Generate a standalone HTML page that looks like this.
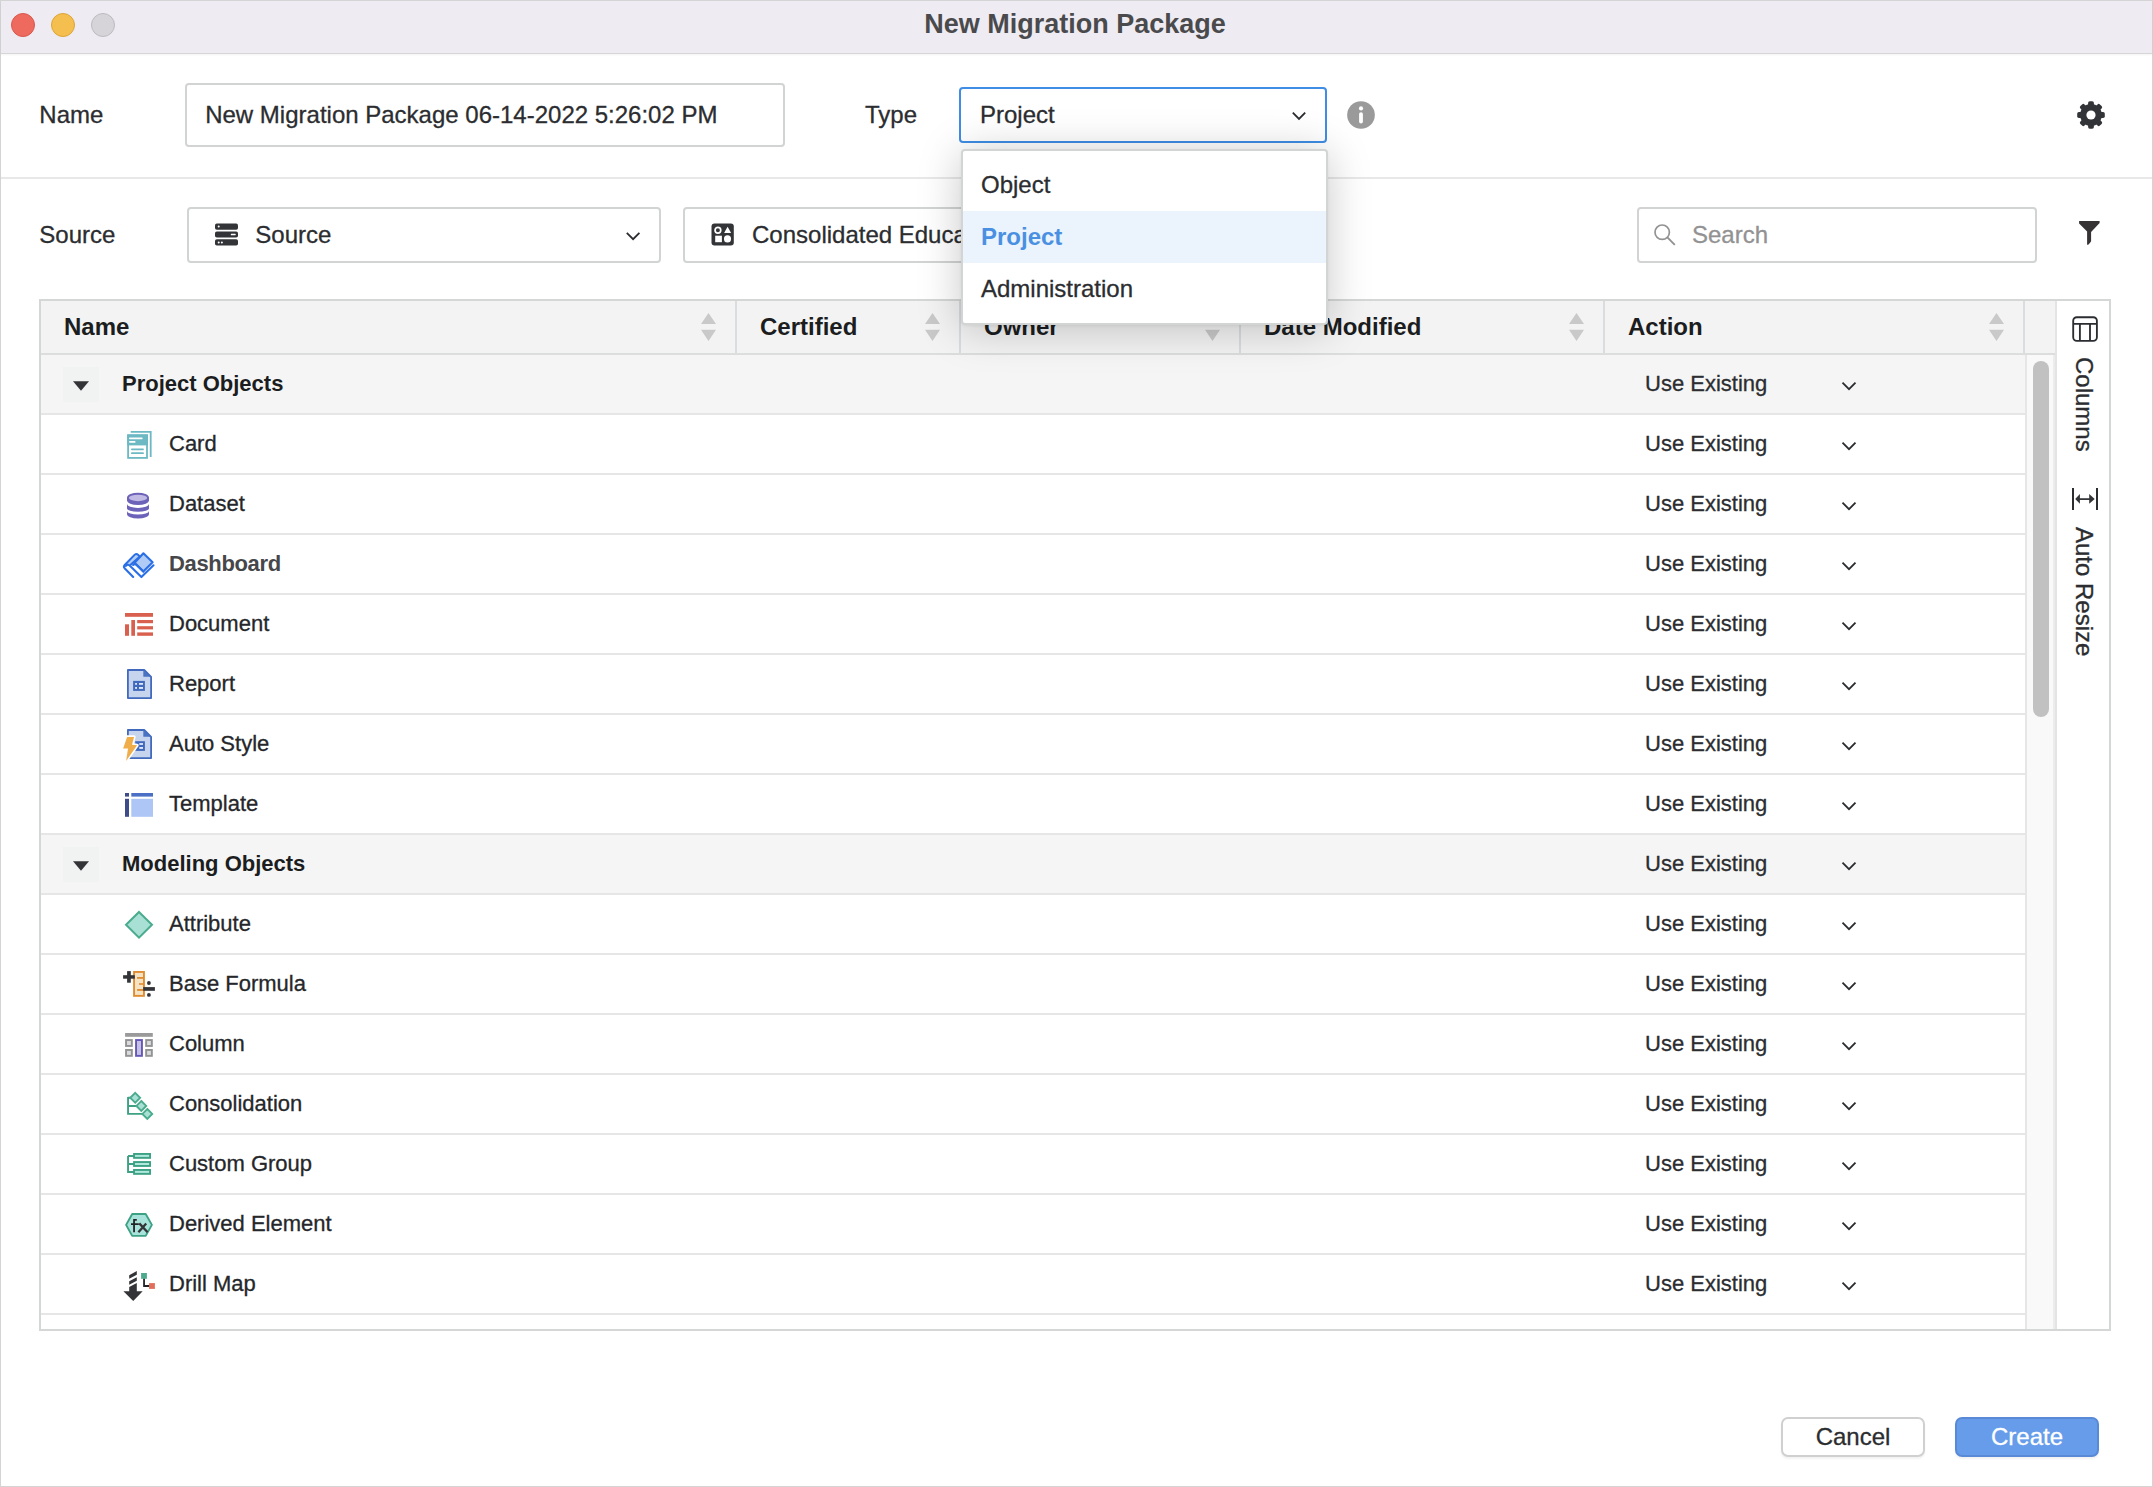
<!DOCTYPE html>
<html>
<head>
<meta charset="utf-8">
<style>
*{box-sizing:border-box;margin:0;padding:0}
html,body{width:2153px;height:1487px;overflow:hidden;background:#fff}
body{font-family:"Liberation Sans",sans-serif;color:#2b2d30;position:relative;-webkit-text-stroke:0.3px currentColor}
svg text{-webkit-text-stroke:0}
.title,.htxt,.gtxt,.bold{-webkit-text-stroke:0}
.abs{position:absolute}
.win{position:absolute;left:0;top:0;width:2153px;height:1487px;border:1px solid #d4d4d4;background:#fff}
.titlebar{position:absolute;left:1px;top:1px;width:2151px;height:53px;background:#eeecf2;border-bottom:1px solid #d6d6d6;box-shadow:0 1px 2px rgba(0,0,0,0.05)}
.title{position:absolute;left:0;top:0;width:2153px;text-align:center;font-size:27px;font-weight:700;line-height:49px;color:#4a4a4d;padding-right:3px}
.light{position:absolute;width:24px;height:24px;border-radius:50%}
.lbl{position:absolute;font-size:24px;white-space:nowrap;color:#2b2d30}
.box{position:absolute;border:2px solid #d2d3d3;border-radius:4px;background:#fff}
.sep{position:absolute;left:1px;width:2151px;height:2px;background:#e8e8e8}
.chev{position:absolute}
.hdr{position:absolute;top:301px;height:52px;background:#f3f3f3}
.htxt{position:absolute;font-size:24px;font-weight:700;line-height:52px;top:301px;color:#1b1d20;white-space:nowrap}
.vdiv{position:absolute;top:301px;width:2px;height:52px;background:#d9dde0}
.sort{position:absolute;top:313px;width:16px;height:28px}
.row{position:absolute;left:41px;width:1984px;height:58px;background:#fff}
.row.grp{background:#f5f5f5}
.rline{position:absolute;left:41px;width:1984px;height:2px;background:#e6e6e6}
.rtxt{position:absolute;left:169px;font-size:22px;line-height:58px;white-space:nowrap;color:#25272a}
.gtxt{position:absolute;left:122px;font-size:22px;font-weight:700;line-height:58px;white-space:nowrap;color:#1b1d20}
.act{position:absolute;left:1645px;font-size:22px;line-height:58px;white-space:nowrap;color:#2b2d30}
.ico{position:absolute;left:119px;width:40px;height:40px}
</style>
</head>
<body>
<div class="win"></div>
<div class="titlebar"></div>
<div class="title">New Migration Package</div>
<div class="light" style="left:11px;top:13px;background:#ee6a5f;border:1px solid #d9574d"></div>
<div class="light" style="left:51px;top:13px;background:#f5bf4f;border:1px solid #dca43a"></div>
<div class="light" style="left:91px;top:13px;background:#d6d4d9;border:1px solid #bdbbc0"></div>

<!-- Name row -->
<div class="lbl" style="left:39.3px;top:83px;line-height:64px">Name</div>
<div class="box" style="left:185px;top:83px;width:600px;height:64px"></div>
<div class="lbl" style="left:205.2px;top:83px;line-height:64px">New Migration Package 06-14-2022 5:26:02 PM</div>
<div class="lbl" style="left:865px;top:83px;line-height:64px">Type</div>
<div class="box" style="left:959px;top:87px;width:368px;height:56px;border-color:#3f8de4"></div>
<div class="lbl" style="left:980px;top:87px;line-height:72px;top:79px">Project</div>
<svg class="chev" style="left:1289px;top:108px" width="20" height="14" viewBox="0 0 20 14"><path d="M3.8 4.7 L10 10.9 L16.2 4.7" fill="none" stroke="#2b2d30" stroke-width="1.85"/></svg>
<svg class="abs" style="left:1347px;top:101px" width="28" height="28" viewBox="0 0 28 28"><circle cx="14" cy="14" r="13.85" fill="#9a9a9a"/><circle cx="14" cy="7.4" r="2.1" fill="#fff"/><rect x="12.1" y="11.2" width="3.8" height="11.3" rx="1.9" fill="#fff"/></svg>
<svg class="abs" style="left:2076px;top:100px" width="30" height="30" viewBox="0 0 30 30"><g fill="#333437" transform="translate(15 15)"><circle r="10.9"/><rect x="-2.9" y="-13.8" width="5.8" height="7" rx="1.7" transform="rotate(0)"/><rect x="-2.9" y="-13.8" width="5.8" height="7" rx="1.7" transform="rotate(45)"/><rect x="-2.9" y="-13.8" width="5.8" height="7" rx="1.7" transform="rotate(90)"/><rect x="-2.9" y="-13.8" width="5.8" height="7" rx="1.7" transform="rotate(135)"/><rect x="-2.9" y="-13.8" width="5.8" height="7" rx="1.7" transform="rotate(180)"/><rect x="-2.9" y="-13.8" width="5.8" height="7" rx="1.7" transform="rotate(225)"/><rect x="-2.9" y="-13.8" width="5.8" height="7" rx="1.7" transform="rotate(270)"/><rect x="-2.9" y="-13.8" width="5.8" height="7" rx="1.7" transform="rotate(315)"/><circle r="4.6" fill="#fff"/></g></svg>

<div class="sep" style="top:177px"></div>

<!-- Source row -->
<div class="lbl" style="left:39.3px;top:207px;line-height:56px">Source</div>
<div class="box" style="left:187px;top:207px;width:474px;height:56px"></div>
<svg class="abs" style="left:215px;top:223px" width="24" height="24" viewBox="0 0 24 24"><g fill="#333437"><rect x="0" y="0.6" width="23" height="6.2" rx="1.8"/><rect x="0" y="8.4" width="23" height="6.2" rx="1.8"/><rect x="0" y="16.3" width="23" height="6.2" rx="1.8"/></g><g fill="#fff"><circle cx="3.7" cy="3.6" r="1"/><rect x="15.8" y="10.8" width="4.9" height="1.4" rx="0.5"/><circle cx="3.7" cy="19.4" r="1"/><circle cx="6.9" cy="19.4" r="1"/></g></svg>
<div class="lbl" style="left:255.3px;top:207px;line-height:56px">Source</div>
<svg class="chev" style="left:622px;top:229px" width="20" height="14" viewBox="0 0 20 14"><path d="M4.8 3.9 L11.1 10.1 L17.4 3.9" fill="none" stroke="#2b2d30" stroke-width="1.85"/></svg>
<div class="box" style="left:683px;top:207px;width:420px;height:56px"></div>
<svg class="abs" style="left:711px;top:223px" width="24" height="24" viewBox="0 0 24 24"><rect x="0.5" y="0.6" width="22.3" height="22" rx="3" fill="#333437"/><circle cx="6.9" cy="7.2" r="2.85" fill="none" stroke="#fff" stroke-width="1.7"/><path d="M16.6 3.7 L20.1 10 L13.1 10Z" fill="#fff"/><rect x="4.2" y="12.7" width="6.7" height="6.5" fill="#fff"/><circle cx="16.5" cy="15.9" r="3.55" fill="#fff"/></svg>
<div class="lbl" style="left:752px;top:207px;line-height:56px">Consolidated Education</div>

<div class="box" style="left:1637px;top:207px;width:400px;height:56px"></div>
<svg class="abs" style="left:1650px;top:220px" width="30" height="30" viewBox="0 0 30 30"><circle cx="12.2" cy="12.2" r="7.2" fill="none" stroke="#929292" stroke-width="1.7"/><path d="M17.4 17.4 L24.8 24.8" stroke="#929292" stroke-width="1.9"/></svg>
<div class="lbl" style="left:1692px;top:207px;line-height:56px;color:#929292">Search</div>
<svg class="abs" style="left:2077px;top:219px" width="26" height="28" viewBox="0 0 26 28"><path d="M2.1 2.1 H22.6 V3.9 L14.1 12.9 V22.3 Q12.8 24.6 11.2 25.7 H10.1 V12.5 L2.1 4.4Z" fill="#363334"/></svg>

<div class="abs" style="left:39px;top:299px;width:2072px;height:1032px;border:2px solid #d5d7d7;background:#fff"></div>
<div class="hdr" style="left:41px;width:2014px"></div>
<div class="abs" style="left:41px;top:353px;width:2014px;height:2px;background:#dcdede"></div>
<div class="htxt" style="left:64px">Name</div>
<svg class="sort" style="left:701px" width="16" height="28" viewBox="0 0 16 28"><path d="M7.5 0 L15 10.9 H0Z M0 16.8 H15 L7.5 28Z" fill="#c9c9c9"/></svg>
<div class="vdiv" style="left:735px"></div>
<div class="htxt" style="left:760px">Certified</div>
<svg class="sort" style="left:925px" width="16" height="28" viewBox="0 0 16 28"><path d="M7.5 0 L15 10.9 H0Z M0 16.8 H15 L7.5 28Z" fill="#c9c9c9"/></svg>
<div class="vdiv" style="left:959px"></div>
<div class="htxt" style="left:984px">Owner</div>
<svg class="sort" style="left:1205px" width="16" height="28" viewBox="0 0 16 28"><path d="M7.5 0 L15 10.9 H0Z M0 16.8 H15 L7.5 28Z" fill="#c9c9c9"/></svg>
<div class="vdiv" style="left:1239px"></div>
<div class="htxt" style="left:1264px">Date Modified</div>
<svg class="sort" style="left:1569px" width="16" height="28" viewBox="0 0 16 28"><path d="M7.5 0 L15 10.9 H0Z M0 16.8 H15 L7.5 28Z" fill="#c9c9c9"/></svg>
<div class="vdiv" style="left:1603px"></div>
<div class="htxt" style="left:1628px">Action</div>
<svg class="sort" style="left:1989px" width="16" height="28" viewBox="0 0 16 28"><path d="M7.5 0 L15 10.9 H0Z M0 16.8 H15 L7.5 28Z" fill="#c9c9c9"/></svg>
<div class="vdiv" style="left:2023px"></div>
<div class="row grp" style="top:355px"></div>
<div class="rline" style="top:413px"></div>
<div class="abs" style="left:63px;top:367px;width:36px;height:35px;background:#f1f2f2"></div>
<svg class="abs" style="left:72px;top:380px" width="18" height="12" viewBox="0 0 18 12"><path d="M1 1.2 H17 L9 10.8Z" fill="#333437"/></svg>
<div class="gtxt" style="top:355px">Project Objects</div>
<div class="act" style="top:355px">Use Existing</div>
<svg class="chev" style="left:1839px;top:379px" width="20" height="14" viewBox="0 0 20 14"><path d="M3.5 3.7 L10 10.2 L16.5 3.7" fill="none" stroke="#2b2d30" stroke-width="1.85"/></svg>
<div class="row" style="top:415px"></div>
<div class="rline" style="top:473px"></div>
<svg class="ico" style="top:424px" width="40" height="40" viewBox="0 0 40 40"><path d="M11.7 7.9 H31.7 V33" fill="none" stroke="#6cb8c3" stroke-width="1.8"/>
<rect x="9.1" y="11.3" width="18.9" height="22.6" fill="#fff" stroke="#6cb8c3" stroke-width="1.8"/>
<rect x="8.2" y="10.4" width="20.7" height="11" fill="#6cb8c3"/>
<rect x="10" y="13.6" width="13.7" height="1.7" rx="0.8" fill="#fff"/><rect x="10" y="17.1" width="6.6" height="1.6" rx="0.8" fill="#fff"/>
<rect x="12" y="24.4" width="12.9" height="1.8" rx="0.9" fill="#6cb8c3"/><rect x="12" y="28.3" width="12.9" height="1.8" rx="0.9" fill="#6cb8c3"/></svg>
<div class="rtxt" style="top:415px">Card</div>
<div class="act" style="top:415px">Use Existing</div>
<svg class="chev" style="left:1839px;top:439px" width="20" height="14" viewBox="0 0 20 14"><path d="M3.5 3.7 L10 10.2 L16.5 3.7" fill="none" stroke="#2b2d30" stroke-width="1.85"/></svg>
<div class="row" style="top:475px"></div>
<div class="rline" style="top:533px"></div>
<svg class="ico" style="top:484px" width="40" height="40" viewBox="0 0 40 40"><path d="M8 14 V16.5 A11 4.6 0 0 0 30 16.5 V14Z" fill="#6d62ba"/>
<ellipse cx="19" cy="13.9" rx="10.1" ry="4.2" fill="#c0bae4" stroke="#6d62ba" stroke-width="1.9"/>
<path d="M8 20 A11 3.9 0 0 0 30 20 V24.6 A11 3.1 0 0 1 8 24.6Z" fill="#6d62ba"/>
<path d="M8 27 A11 3.6 0 0 0 30 27 V30.3 A11 4.3 0 0 1 8 30.3Z" fill="#6d62ba"/></svg>
<div class="rtxt" style="top:475px">Dataset</div>
<div class="act" style="top:475px">Use Existing</div>
<svg class="chev" style="left:1839px;top:499px" width="20" height="14" viewBox="0 0 20 14"><path d="M3.5 3.7 L10 10.2 L16.5 3.7" fill="none" stroke="#2b2d30" stroke-width="1.85"/></svg>
<div class="row" style="top:535px"></div>
<div class="rline" style="top:593px"></div>
<svg class="ico" style="top:544px" width="40" height="40" viewBox="0 0 40 40"><path d="M24.4 9.3 L33.6 18.3 L24.3 27.6 L15.6 18.8Z" fill="#b0cbf5" stroke="#2b6fe6" stroke-width="2.1" stroke-linejoin="round"/>
<path d="M17.5 11.3 L19.9 13.1 L11.4 20.4 L9 19Z" fill="#b0cbf5"/>
<g fill="none" stroke="#2b6fe6" stroke-width="2.1" stroke-linecap="round" stroke-linejoin="round"><path d="M14.2 32.9 L5.6 24.2 Q4.2 22.5 5.7 20.9 L15.8 10.8 Q17.4 9.5 19 10.8 L20.6 12.5"/>
<path d="M20.3 12.9 L11.9 20.6"/><path d="M6.9 21.9 Q8.5 19.7 10.4 21.3 L22.4 33.1 L34.5 21.3"/><path d="M14.1 21 Q15.5 19.3 17.3 20.8 L24.3 27.6"/></g></svg>
<div class="rtxt bold" style="top:535px;font-weight:700;color:#46474a;letter-spacing:-0.35px">Dashboard</div>
<div class="act" style="top:535px">Use Existing</div>
<svg class="chev" style="left:1839px;top:559px" width="20" height="14" viewBox="0 0 20 14"><path d="M3.5 3.7 L10 10.2 L16.5 3.7" fill="none" stroke="#2b2d30" stroke-width="1.85"/></svg>
<div class="row" style="top:595px"></div>
<div class="rline" style="top:653px"></div>
<svg class="ico" style="top:604px" width="40" height="40" viewBox="0 0 40 40"><g fill="#d9604e"><rect x="6" y="9" width="28" height="3.8"/><rect x="6" y="20.3" width="4" height="11.5"/><rect x="12.3" y="16" width="3.7" height="15.8"/>
<rect x="18.2" y="16" width="15.8" height="3.2"/><rect x="18.2" y="22.2" width="15.8" height="3.2"/><rect x="18.2" y="28.4" width="15.8" height="3.4"/></g></svg>
<div class="rtxt" style="top:595px">Document</div>
<div class="act" style="top:595px">Use Existing</div>
<svg class="chev" style="left:1839px;top:619px" width="20" height="14" viewBox="0 0 20 14"><path d="M3.5 3.7 L10 10.2 L16.5 3.7" fill="none" stroke="#2b2d30" stroke-width="1.85"/></svg>
<div class="row" style="top:655px"></div>
<div class="rline" style="top:713px"></div>
<svg class="ico" style="top:664px" width="40" height="40" viewBox="0 0 40 40"><path d="M8.9 6 H25.2 L32.1 12.9 V34.1 H8.9Z" fill="#c6d4ee" stroke="#4169bd" stroke-width="1.8" stroke-linejoin="round"/>
<path d="M24.3 6 V12.8 H32Z" fill="#4a73c2"/>
<rect x="14.1" y="16.9" width="11.8" height="10" fill="#4169bd"/><rect x="16.1" y="19" width="1.9" height="1.8" fill="#e0e8f6"/><rect x="20" y="19" width="4" height="1.8" fill="#e0e8f6"/><rect x="16.1" y="23" width="1.9" height="1.9" fill="#e0e8f6"/><rect x="20" y="23" width="4" height="1.9" fill="#e0e8f6"/></svg>
<div class="rtxt" style="top:655px">Report</div>
<div class="act" style="top:655px">Use Existing</div>
<svg class="chev" style="left:1839px;top:679px" width="20" height="14" viewBox="0 0 20 14"><path d="M3.5 3.7 L10 10.2 L16.5 3.7" fill="none" stroke="#2b2d30" stroke-width="1.85"/></svg>
<div class="row" style="top:715px"></div>
<div class="rline" style="top:773px"></div>
<svg class="ico" style="top:724px" width="40" height="40" viewBox="0 0 40 40"><path d="M8.9 6 H25.2 L32.1 12.9 V34.1 H8.9Z" fill="#c6d4ee" stroke="#4169bd" stroke-width="1.8" stroke-linejoin="round"/>
<path d="M24.3 6 V12.8 H32Z" fill="#4a73c2"/>
<rect x="16.2" y="17.2" width="9.7" height="9.7" fill="#4169bd"/><rect x="20.3" y="19.1" width="3.7" height="1.8" fill="#e0e8f6"/><rect x="20.3" y="23" width="3.7" height="1.9" fill="#e0e8f6"/>
<path d="M8.1 12.9 H15.1 L13 20.7 L18.1 21.3 L7.1 36.9 L9 24.5 H4.1Z" fill="#fff" stroke="#fff" stroke-width="3.2" stroke-linejoin="round"/>
<path d="M8.1 12.9 H15.1 L13 20.7 L18.1 21.3 L7.1 36.9 L9 24.5 H4.1Z" fill="#f0ae4a"/></svg>
<div class="rtxt" style="top:715px">Auto Style</div>
<div class="act" style="top:715px">Use Existing</div>
<svg class="chev" style="left:1839px;top:739px" width="20" height="14" viewBox="0 0 20 14"><path d="M3.5 3.7 L10 10.2 L16.5 3.7" fill="none" stroke="#2b2d30" stroke-width="1.85"/></svg>
<div class="row" style="top:775px"></div>
<div class="rline" style="top:833px"></div>
<svg class="ico" style="top:784px" width="40" height="40" viewBox="0 0 40 40"><rect x="6" y="9" width="4" height="3.6" fill="#404b8a"/><rect x="6" y="14.8" width="4" height="18" fill="#404b8a"/>
<rect x="12.3" y="9" width="21.7" height="3.6" fill="#4a6fc4"/><rect x="12.3" y="14.8" width="21.7" height="18" fill="#adc6f5"/></svg>
<div class="rtxt" style="top:775px">Template</div>
<div class="act" style="top:775px">Use Existing</div>
<svg class="chev" style="left:1839px;top:799px" width="20" height="14" viewBox="0 0 20 14"><path d="M3.5 3.7 L10 10.2 L16.5 3.7" fill="none" stroke="#2b2d30" stroke-width="1.85"/></svg>
<div class="row grp" style="top:835px"></div>
<div class="rline" style="top:893px"></div>
<div class="abs" style="left:63px;top:847px;width:36px;height:35px;background:#f1f2f2"></div>
<svg class="abs" style="left:72px;top:860px" width="18" height="12" viewBox="0 0 18 12"><path d="M1 1.2 H17 L9 10.8Z" fill="#333437"/></svg>
<div class="gtxt" style="top:835px">Modeling Objects</div>
<div class="act" style="top:835px">Use Existing</div>
<svg class="chev" style="left:1839px;top:859px" width="20" height="14" viewBox="0 0 20 14"><path d="M3.5 3.7 L10 10.2 L16.5 3.7" fill="none" stroke="#2b2d30" stroke-width="1.85"/></svg>
<div class="row" style="top:895px"></div>
<div class="rline" style="top:953px"></div>
<svg class="ico" style="top:904px" width="40" height="40" viewBox="0 0 40 40"><path d="M20 8 L33 20.8 L20 33.6 L7 20.8Z" fill="#a8e0d5" stroke="#4aab8d" stroke-width="2"/></svg>
<div class="rtxt" style="top:895px">Attribute</div>
<div class="act" style="top:895px">Use Existing</div>
<svg class="chev" style="left:1839px;top:919px" width="20" height="14" viewBox="0 0 20 14"><path d="M3.5 3.7 L10 10.2 L16.5 3.7" fill="none" stroke="#2b2d30" stroke-width="1.85"/></svg>
<div class="row" style="top:955px"></div>
<div class="rline" style="top:1013px"></div>
<svg class="ico" style="top:964px" width="40" height="40" viewBox="0 0 40 40"><rect x="15.05" y="7.95" width="9.9" height="23.9" fill="#f5e3c6" stroke="#e08c30" stroke-width="1.9"/>
<g fill="#e08c30"><rect x="18.1" y="13" width="6.2" height="1.8"/><rect x="20" y="19.2" width="4.3" height="1.6"/><rect x="18.1" y="25" width="6.2" height="1.9"/></g>
<rect x="4.1" y="11.2" width="11.7" height="3.5" fill="#333437"/><rect x="8.1" y="7.1" width="3.7" height="11.6" fill="#333437"/>
<rect x="24.2" y="23.1" width="11.7" height="3.7" fill="#333437"/><circle cx="29.9" cy="19" r="1.9" fill="#333437"/><circle cx="29.9" cy="30.9" r="1.9" fill="#333437"/></svg>
<div class="rtxt" style="top:955px">Base Formula</div>
<div class="act" style="top:955px">Use Existing</div>
<svg class="chev" style="left:1839px;top:979px" width="20" height="14" viewBox="0 0 20 14"><path d="M3.5 3.7 L10 10.2 L16.5 3.7" fill="none" stroke="#2b2d30" stroke-width="1.85"/></svg>
<div class="row" style="top:1015px"></div>
<div class="rline" style="top:1073px"></div>
<svg class="ico" style="top:1024px" width="40" height="40" viewBox="0 0 40 40"><rect x="6.1" y="9" width="27.7" height="3.8" fill="#9a9a9a"/>
<g fill="#d8dcdf" stroke="#939393" stroke-width="1.9"><rect x="7.05" y="16.05" width="5.8" height="5.9"/><rect x="7.05" y="25.95" width="5.8" height="5.9"/><rect x="27.15" y="16.05" width="5.7" height="5.9"/><rect x="27.15" y="25.95" width="5.7" height="5.9"/></g>
<rect x="17.05" y="16.05" width="5.9" height="15.8" fill="#c5c0e4" stroke="#6558b5" stroke-width="1.9"/></svg>
<div class="rtxt" style="top:1015px">Column</div>
<div class="act" style="top:1015px">Use Existing</div>
<svg class="chev" style="left:1839px;top:1039px" width="20" height="14" viewBox="0 0 20 14"><path d="M3.5 3.7 L10 10.2 L16.5 3.7" fill="none" stroke="#2b2d30" stroke-width="1.85"/></svg>
<div class="row" style="top:1075px"></div>
<div class="rline" style="top:1133px"></div>
<svg class="ico" style="top:1084px" width="40" height="40" viewBox="0 0 40 40"><path d="M9.05 13 V29.9 H23 M9.05 13.8 H12 M9.05 21.95 H18" fill="none" stroke="#3da183" stroke-width="1.9"/>
<g fill="#a8e0d5" stroke="#4aab8d" stroke-width="1.9"><path d="M16.2 8.9 L21.1 13.8 L16.2 18.7 L11.3 13.8Z"/><path d="M22.3 17 L27.2 21.9 L22.3 26.8 L17.4 21.9Z"/><path d="M28.3 25 L33.2 29.9 L28.3 34.8 L23.4 29.9Z"/></g></svg>
<div class="rtxt" style="top:1075px">Consolidation</div>
<div class="act" style="top:1075px">Use Existing</div>
<svg class="chev" style="left:1839px;top:1099px" width="20" height="14" viewBox="0 0 20 14"><path d="M3.5 3.7 L10 10.2 L16.5 3.7" fill="none" stroke="#2b2d30" stroke-width="1.85"/></svg>
<div class="row" style="top:1135px"></div>
<div class="rline" style="top:1193px"></div>
<svg class="ico" style="top:1144px" width="40" height="40" viewBox="0 0 40 40"><path d="M9.05 12.05 V28.05 H15 M9.05 12.05 H15 M9.05 19.95 H15" fill="none" stroke="#3da183" stroke-width="1.9"/>
<g fill="#b0e8de" stroke="#3da183" stroke-width="1.9"><rect x="15.05" y="9.95" width="16" height="3.9"/><rect x="15.05" y="18.05" width="16" height="3.9"/><rect x="15.05" y="25.95" width="16" height="3.9"/></g></svg>
<div class="rtxt" style="top:1135px">Custom Group</div>
<div class="act" style="top:1135px">Use Existing</div>
<svg class="chev" style="left:1839px;top:1159px" width="20" height="14" viewBox="0 0 20 14"><path d="M3.5 3.7 L10 10.2 L16.5 3.7" fill="none" stroke="#2b2d30" stroke-width="1.85"/></svg>
<div class="row" style="top:1195px"></div>
<div class="rline" style="top:1253px"></div>
<svg class="ico" style="top:1204px" width="40" height="40" viewBox="0 0 40 40"><path d="M13.2 10.05 H26.7 L32.9 20.9 L26.7 31.85 H13.2 L7.1 20.9Z" fill="#a8e3db" stroke="#3da183" stroke-width="1.9" stroke-linejoin="round"/>
<path d="M17.8 15.85 H15.05 V28.2 M12 20.05 H19.8" fill="none" stroke="#222326" stroke-width="1.8"/>
<path d="M20.3 19.4 L28.6 28.2 M27.2 19.4 L19.4 28.2" fill="none" stroke="#333437" stroke-width="2.3"/></svg>
<div class="rtxt" style="top:1195px">Derived Element</div>
<div class="act" style="top:1195px">Use Existing</div>
<svg class="chev" style="left:1839px;top:1219px" width="20" height="14" viewBox="0 0 20 14"><path d="M3.5 3.7 L10 10.2 L16.5 3.7" fill="none" stroke="#2b2d30" stroke-width="1.85"/></svg>
<div class="row" style="top:1255px"></div>
<div class="rline" style="top:1313px"></div>
<svg class="ico" style="top:1264px" width="40" height="40" viewBox="0 0 40 40"><path d="M10.2 11.3 L17.8 7.1 V10.8 L10.2 14.8Z M10.2 17.2 L17.8 13.2 V16.8 L10.2 20.7Z M10.2 23.1 L17.8 19.1 V27.2 H23.7 L14.2 36.9 L4.4 27.2 H10.2Z" fill="#333437"/>
<rect x="22.1" y="9" width="5.8" height="5.8" fill="#4daa8e"/><rect x="30.1" y="19.1" width="5.8" height="5.8" fill="#e06e5a"/>
<path d="M25.05 14.8 V22 H30.1" fill="none" stroke="#222326" stroke-width="1.8"/></svg>
<div class="rtxt" style="top:1255px">Drill Map</div>
<div class="act" style="top:1255px">Use Existing</div>
<svg class="chev" style="left:1839px;top:1279px" width="20" height="14" viewBox="0 0 20 14"><path d="M3.5 3.7 L10 10.2 L16.5 3.7" fill="none" stroke="#2b2d30" stroke-width="1.85"/></svg>
<div class="rline" style="top:1313px"></div>
<div class="abs" style="left:2025px;top:355px;width:2px;height:974px;background:#e6e6e6"></div>
<div class="abs" style="left:2027px;top:355px;width:26px;height:974px;background:#f9f9f9"></div>
<div class="abs" style="left:2053px;top:355px;width:2px;height:974px;background:#ececec"></div>
<div class="abs" style="left:2033px;top:361px;width:16px;height:356px;border-radius:8px;background:#c1c1c1"></div>
<div class="abs" style="left:2055px;top:301px;width:2px;height:1028px;background:#e4e4e4"></div>
<svg class="abs" style="left:2070px;top:314px" width="30" height="30" viewBox="0 0 30 30"><rect x="3.2" y="3.2" width="23.7" height="23.7" rx="3.6" fill="none" stroke="#2b2d30" stroke-width="1.85"/><path d="M3.2 9.9 H26.9 M9.9 9.9 V26.9 M20 9.9 V26.9" stroke="#2b2d30" stroke-width="1.85"/></svg>
<div class="abs" style="left:2071px;top:357px;writing-mode:vertical-rl;font-size:24px;line-height:26px;white-space:nowrap;color:#2b2d30">Columns</div>
<svg class="abs" style="left:2070px;top:486px" width="30" height="26" viewBox="0 0 30 26"><path d="M3 2 V24 M27 2 V24" stroke="#2b2d30" stroke-width="2"/><path d="M8 13.1 H21" stroke="#2b2d30" stroke-width="1.7"/><path d="M5.2 12.9 L9.9 8 V17.8Z M24.7 12.9 L19.2 8 V17.8Z" fill="#333437"/></svg>
<div class="abs" style="left:2071px;top:527px;writing-mode:vertical-rl;font-size:24px;line-height:26px;white-space:nowrap;color:#2b2d30">Auto Resize</div><!-- dropdown -->
<div class="abs" style="left:961px;top:149px;width:367px;height:176px;background:#fff;border:2px solid #d3d5d5;border-radius:4px;box-shadow:0 4px 44px rgba(0,0,0,0.22), 0 1px 3px rgba(0,0,0,0.06)"></div>
<div class="abs" style="left:963px;top:211px;width:363px;height:52px;background:#ebf3fc"></div>
<div class="lbl" style="left:981px;top:159px;line-height:52px">Object</div>
<div class="lbl bold" style="left:981px;top:211px;line-height:52px;font-weight:700;color:#4a90e2">Project</div>
<div class="lbl" style="left:981px;top:263px;line-height:52px">Administration</div>

<!-- buttons -->
<div class="abs" style="left:1781px;top:1417px;width:144px;height:40px;border:2px solid #d0d0d0;border-radius:7px;background:#fff;box-shadow:0 2px 2px rgba(0,0,0,0.05)"></div>
<div class="lbl" style="left:1781px;top:1417px;width:144px;text-align:center;line-height:40px">Cancel</div>
<div class="abs" style="left:1955px;top:1417px;width:144px;height:40px;border:2px solid #5a8ad6;border-radius:7px;background:#669cea;box-shadow:0 2px 2px rgba(0,0,0,0.05)"></div>
<div class="lbl" style="left:1955px;top:1417px;width:144px;text-align:center;line-height:40px;color:#fff">Create</div>
</body>
</html>
